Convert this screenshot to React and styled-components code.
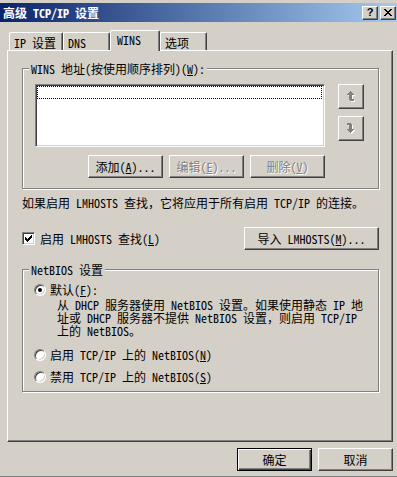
import React from 'react';
import styled, { createGlobalStyle, css } from 'styled-components';

const FONT = `"Noto Sans Mono CJK SC", "Noto Sans CJK SC", "Liberation Mono", monospace`;

const GlobalStyle = createGlobalStyle`
  html, body {
    margin: 0;
    padding: 0;
    background: #d4d0c8;
  }
  body {
    font-family: ${FONT};
    font-size: 12px;
    color: #000;
  }
`;

// Classic 3D edges
const raised = css`
  border: 1px solid;
  border-color: #fff #404040 #404040 #fff;
  box-shadow: inset -1px -1px 0 #808080;
`;

const sunken = css`
  border: 1px solid;
  border-color: #808080 #fff #fff #808080;
  box-shadow: inset 1px 1px 0 #404040, inset -1px -1px 0 #d4d0c8;
`;

const Window = styled.div`
  width: 397px;
  height: 477px;
  box-sizing: border-box;
  background: #d4d0c8;
  padding-top: 3px;
  border-bottom: 1px solid #808080;
  display: flex;
  flex-direction: column;
`;

const TitleBar = styled.div`
  height: 19px;
  display: flex;
  align-items: center;
  justify-content: space-between;
  padding: 0 1px 0 3px;
  background: linear-gradient(to right, #0a246a, #a6caf0);
`;

const Title = styled.span`
  color: #fff;
  font-weight: bold;
  font-size: 12px;
  line-height: 14px;
  white-space: nowrap;
`;

const CaptionButtons = styled.div`
  display: flex;
  gap: 2px;
`;

const CaptionButton = styled.div`
  box-sizing: border-box;
  width: 16px;
  height: 14px;
  background: #d4d0c8;
  ${raised};
  display: flex;
  align-items: center;
  justify-content: center;
  font-family: "Liberation Sans", sans-serif;
  font-weight: bold;
  font-size: 11px;
  line-height: 11px;
`;

const Body = styled.div`
  flex: 1;
  display: flex;
  flex-direction: column;
  padding: 8px 4px 0 7px;
`;

const TabStrip = styled.div`
  position: relative;
  z-index: 1;
  display: flex;
  align-items: flex-end;
  height: 20px;
  padding-left: 2px;
`;

const Tab = styled.div`
  box-sizing: border-box;
  width: ${(p) => p.$w}px;
  height: ${(p) => (p.$active ? 21 : 18)}px;
  margin-bottom: ${(p) => (p.$active ? -1 : 0)}px;
  background: #d4d0c8;
  border-top: 1px solid #fff;
  border-left: 1px solid #fff;
  border-right: 1px solid #404040;
  box-shadow: inset -1px 0 0 #808080;
  border-radius: 2px 2px 0 0;
  padding: ${(p) => (p.$active ? '2px 0 0 6px' : '3px 0 0 4px')};
  line-height: 14px;
  white-space: nowrap;
`;

const Panel = styled.div`
  box-sizing: border-box;
  width: 386px;
  height: 392px;
  ${raised};
  padding: 17px 12px 0 14px;
  display: flex;
  flex-direction: column;
`;

const GroupBox = styled.div`
  position: relative;
  box-sizing: border-box;
  width: 357px;
  height: ${(p) => p.$h}px;
  border: 1px solid #808080;
  box-shadow: inset 1px 1px 0 #fff, 1px 1px 0 #fff;
  padding: ${(p) => p.$pad};
  margin-top: ${(p) => p.$mt || 0}px;
`;

const GroupLabel = styled.span`
  position: absolute;
  top: -7px;
  left: 6px;
  padding: 0 2px;
  background: #d4d0c8;
  line-height: 13px;
  white-space: nowrap;
`;

const ListRow = styled.div`
  display: flex;
  gap: 13px;
`;

const ListBox = styled.div`
  box-sizing: border-box;
  width: 290px;
  height: 63px;
  background: #fff;
  ${sunken};
  padding: 1px 2px 0 1px;
`;

const FocusRow = styled.div`
  height: 11px;
  border: 1px dotted #000;
`;

const ArrowCol = styled.div`
  display: flex;
  flex-direction: column;
  gap: 7px;
`;

const ArrowButton = styled.div`
  box-sizing: border-box;
  width: 26px;
  height: 25px;
  background: #d4d0c8;
  ${raised};
  display: flex;
  align-items: center;
  justify-content: center;
`;

const ButtonRow = styled.div`
  width: 290px;
  margin-top: 8px;
  display: flex;
  justify-content: flex-end;
  gap: 6px;
`;

const Button = styled.div`
  box-sizing: border-box;
  width: ${(p) => p.$w || 75}px;
  height: 23px;
  background: #d4d0c8;
  ${raised};
  display: flex;
  align-items: center;
  justify-content: center;
  line-height: 14px;
  white-space: nowrap;
  color: ${(p) => (p.$disabled ? '#808080' : '#000')};
  text-shadow: ${(p) => (p.$disabled ? '1px 1px 0 #fff' : 'none')};
  ${(p) =>
    p.$default &&
    css`
      border: 1px solid #000;
      box-shadow: inset 1px 1px 0 #fff, inset -1px -1px 0 #404040, inset -2px -2px 0 #808080;
    `}
`;

const Note = styled.div`
  margin-top: 7px;
  line-height: 14px;
  white-space: nowrap;
`;

const CheckRow = styled.div`
  margin-top: 17px;
  height: 23px;
  display: flex;
  align-items: center;
  justify-content: space-between;
  padding-right: 1px;
`;

const CheckLabel = styled.label`
  display: flex;
  align-items: center;
  gap: 5px;
  line-height: 14px;
  white-space: nowrap;
`;

const CheckBox = styled.span`
  box-sizing: border-box;
  width: 13px;
  height: 13px;
  background: #fff;
  ${sunken};
  display: flex;
  align-items: center;
  justify-content: center;
`;

const RadioRow = styled.label`
  display: flex;
  align-items: center;
  gap: 4px;
  height: 13px;
  margin-top: ${(p) => p.$mt || 0}px;
  line-height: 13px;
  white-space: nowrap;
`;

const Radio = styled.span`
  position: relative;
  box-sizing: border-box;
  width: 12px;
  height: 12px;
  border-radius: 50%;
  background: #fff;
  ${sunken};
  &::after {
    content: '';
    display: ${(p) => (p.$checked ? 'block' : 'none')};
    position: absolute;
    left: 3px;
    top: 3px;
    width: 4px;
    height: 4px;
    border-radius: 50%;
    background: #000;
  }
`;

const Description = styled.div`
  margin-top: 2px;
  margin-left: 23px;
  line-height: 13px;
  white-space: nowrap;
`;

const Footer = styled.div`
  margin-top: 6px;
  display: flex;
  justify-content: flex-end;
  gap: 6px;
`;

const UpArrow = () => (
  <svg width="9" height="12" viewBox="0 0 9 12" shapeRendering="crispEdges">
    <g fill="#fff" transform="translate(1 1)">
      <rect x="3" y="0" width="1" height="1" />
      <rect x="2" y="1" width="3" height="1" />
      <rect x="1" y="2" width="5" height="1" />
      <rect x="0" y="3" width="7" height="1" />
      <rect x="2" y="4" width="3" height="5" />
      <rect x="3" y="8" width="4" height="2" />
    </g>
    <g fill="#808080">
      <rect x="3" y="0" width="1" height="1" />
      <rect x="2" y="1" width="3" height="1" />
      <rect x="1" y="2" width="5" height="1" />
      <rect x="0" y="3" width="7" height="1" />
      <rect x="2" y="4" width="3" height="5" />
      <rect x="3" y="8" width="4" height="2" />
    </g>
  </svg>
);

const DownArrow = () => (
  <svg width="9" height="12" viewBox="0 0 9 12" shapeRendering="crispEdges">
    <g fill="#fff" transform="translate(1 1)">
      <rect x="0" y="0" width="4" height="2" />
      <rect x="2" y="1" width="3" height="5" />
      <rect x="0" y="6" width="7" height="1" />
      <rect x="1" y="7" width="5" height="1" />
      <rect x="2" y="8" width="3" height="1" />
      <rect x="3" y="9" width="1" height="1" />
    </g>
    <g fill="#808080">
      <rect x="0" y="0" width="4" height="2" />
      <rect x="2" y="1" width="3" height="5" />
      <rect x="0" y="6" width="7" height="1" />
      <rect x="1" y="7" width="5" height="1" />
      <rect x="2" y="8" width="3" height="1" />
      <rect x="3" y="9" width="1" height="1" />
    </g>
  </svg>
);

const CloseGlyph = () => (
  <svg width="8" height="7" viewBox="0 0 8 7" shapeRendering="crispEdges">
    <path fill="#000" d="M0 0h2v1h1v1h2V1h1V0h2v1H7v1H6v1H5v1h1v1h1v1h1v1H6V6H5V5H3v1H2v1H0V6h1V5h1V4h1V3H2V2H1V1H0z" />
  </svg>
);

const CheckGlyph = () => (
  <svg width="7" height="7" viewBox="0 0 7 7" shapeRendering="crispEdges">
    <path fill="#000" d="M6 0h1v3H6v1H5v1H4v1H3v1H2V6H1V5H0V2h1v1h1v1h1V3h1V2h1V1h1z" />
  </svg>
);

export default function App() {
  return (
    <>
      <GlobalStyle />
      <Window>
        <TitleBar>
          <Title>高级 TCP/IP 设置</Title>
          <CaptionButtons>
            <CaptionButton>?</CaptionButton>
            <CaptionButton>
              <CloseGlyph />
            </CaptionButton>
          </CaptionButtons>
        </TitleBar>

        <Body>
          <TabStrip>
            <Tab $w={54}>IP 设置</Tab>
            <Tab $w={47}>DNS</Tab>
            <Tab $w={50} $active>WINS</Tab>
            <Tab $w={47}>选项</Tab>
          </TabStrip>

          <Panel>
            <GroupBox $h={121} $pad="15px 0 0 12px">
              <GroupLabel>
                WINS 地址(按使用顺序排列)(<u>W</u>):
              </GroupLabel>
              <ListRow>
                <ListBox>
                  <FocusRow />
                </ListBox>
                <ArrowCol>
                  <ArrowButton>
                    <UpArrow />
                  </ArrowButton>
                  <ArrowButton>
                    <DownArrow />
                  </ArrowButton>
                </ArrowCol>
              </ListRow>
              <ButtonRow>
                <Button>
                  <span>添加(<u>A</u>)...</span>
                </Button>
                <Button $disabled>
                  <span>编辑(<u>E</u>)...</span>
                </Button>
                <Button $disabled>
                  <span>删除(<u>V</u>)</span>
                </Button>
              </ButtonRow>
            </GroupBox>

            <Note>如果启用 LMHOSTS 查找，它将应用于所有启用 TCP/IP 的连接。</Note>

            <CheckRow>
              <CheckLabel>
                <CheckBox>
                  <CheckGlyph />
                </CheckBox>
                <span>启用 LMHOSTS 查找(<u>L</u>)</span>
              </CheckLabel>
              <Button $w={135}>
                <span>导入 LMHOSTS(<u>M</u>)...</span>
              </Button>
            </CheckRow>

            <GroupBox $h={123} $mt={19} $pad="13px 0 0 11px">
              <GroupLabel>NetBIOS 设置</GroupLabel>
              <RadioRow>
                <Radio $checked />
                <span>默认(<u>F</u>):</span>
              </RadioRow>
              <Description>
                从 DHCP 服务器使用 NetBIOS 设置。如果使用静态 IP 地
                <br />
                址或 DHCP 服务器不提供 NetBIOS 设置，则启用 TCP/IP
                <br />
                上的 NetBIOS。
              </Description>
              <RadioRow $mt={11}>
                <Radio />
                <span>启用 TCP/IP 上的 NetBIOS(<u>N</u>)</span>
              </RadioRow>
              <RadioRow $mt={9}>
                <Radio />
                <span>禁用 TCP/IP 上的 NetBIOS(<u>S</u>)</span>
              </RadioRow>
            </GroupBox>
          </Panel>

          <Footer>
            <Button $default>确定</Button>
            <Button>取消</Button>
          </Footer>
        </Body>
      </Window>
    </>
  );
}
